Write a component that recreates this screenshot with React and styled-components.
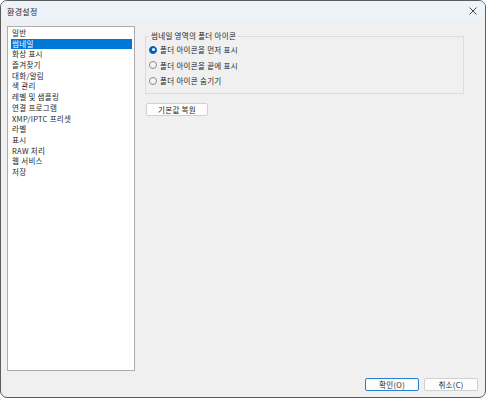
import React from "react";
import styled, { createGlobalStyle } from "styled-components";

const Global = createGlobalStyle`
  html, body { margin: 0; padding: 0; background: #ffffff; }
  body { font-family: "Noto Sans CJK KR", "Noto Sans", sans-serif; }
`;

const Window = styled.div`
  box-sizing: border-box;
  width: 486px;
  height: 398px;
  border: 1px solid #5c5c5c;
  border-radius: 7px;
  overflow: hidden;
  display: flex;
  flex-direction: column;
  background: #f0f0f0;
  font-family: "Noto Sans CJK KR", "Noto Sans", sans-serif;
  font-size: 7.5px;
  letter-spacing: 0.3px;
  color: #262626;
`;

const TitleBar = styled.div`
  height: 20px;
  flex: none;
  background: #eef3fa;
  display: flex;
  align-items: center;
  justify-content: space-between;
  padding: 0 4px 0 6px;
`;

const Title = styled.span`
  font-size: 8px;
  color: #262626;
`;

const CloseBtn = styled.div`
  width: 16px;
  height: 16px;
  display: flex;
  align-items: center;
  justify-content: center;
`;

const Body = styled.div`
  flex: 1;
  display: flex;
  flex-direction: column;
  padding: 5px 6px 0 6px;
`;

const Main = styled.div`
  display: flex;
  gap: 10px;
  height: 345px;
`;

const List = styled.div`
  box-sizing: border-box;
  width: 128px;
  height: 345px;
  background: #ffffff;
  border: 1px solid #a9acb2;
  padding: 1px 2px 0 3px;
  display: flex;
  flex-direction: column;
`;

const Item = styled.div`
  height: 10.7px;
  line-height: 10.7px;
  padding-left: 1px;
  white-space: nowrap;
  background: ${(p) => (p.$selected ? "#0078d7" : "transparent")};
  color: ${(p) => (p.$selected ? "#ffffff" : "#262626")};
`;

const Panel = styled.div`
  display: flex;
  flex-direction: column;
  align-items: flex-start;
  padding-top: 5px;
`;

const Group = styled.fieldset`
  box-sizing: border-box;
  width: 319px;
  height: 63px;
  margin: 0;
  border: 1px solid #dcdcdc;
  padding: 3px 0 0 3px;
  display: flex;
  flex-direction: column;
  gap: 4.5px;
`;

const Legend = styled.legend`
  padding: 0 2px;
  margin-left: 0;
  font-size: 7.5px;
  line-height: 10px;
`;

const RadioRow = styled.label`
  display: flex;
  align-items: center;
  gap: 3px;
  height: 11px;
  line-height: 11px;
`;

const RadioCircle = styled.span`
  box-sizing: border-box;
  width: 8px;
  height: 8px;
  border-radius: 50%;
  flex: none;
  display: flex;
  align-items: center;
  justify-content: center;
  background: ${(p) => (p.$checked ? "#005fb8" : "#f6f6f6")};
  border: 1px solid ${(p) => (p.$checked ? "#005fb8" : "#8a8a8a")};
  &::after {
    content: "";
    display: ${(p) => (p.$checked ? "block" : "none")};
    width: 3px;
    height: 3px;
    border-radius: 50%;
    background: #ffffff;
  }
`;

const Button = styled.button`
  box-sizing: border-box;
  width: ${(p) => p.$w}px;
  height: 13px;
  padding: 0;
  margin: 0;
  font-family: inherit;
  font-size: 7.5px;
  letter-spacing: 0.3px;
  line-height: 11px;
  color: #262626;
  background: #fdfdfd;
  border: 1px solid ${(p) => (p.$primary ? "#2a7fd4" : "#d0d0d0")};
  border-radius: 2px;
`;

const ResetButton = styled(Button)`
  margin-top: 9px;
  margin-left: 1px;
`;

const Footer = styled.div`
  display: flex;
  justify-content: flex-end;
  gap: 5px;
  margin-top: 7px;
  padding-right: 1px;
`;

const items = [
  "일반",
  "썸네일",
  "화상 표시",
  "즐겨찾기",
  "대화/알림",
  "색 관리",
  "레벨 및 샘플링",
  "연결 프로그램",
  "XMP/IPTC 프리셋",
  "라벨",
  "표시",
  "RAW 처리",
  "웹 서비스",
  "저장",
];

const radios = ["폴더 아이콘을 먼저 표시", "폴더 아이콘을 끝에 표시", "폴더 아이콘 숨기기"];

export default function App() {
  return (
    <>
      <Global />
      <Window>
        <TitleBar>
          <Title>환경설정</Title>
          <CloseBtn>
            <svg width="8" height="8" viewBox="0 0 8 8">
              <path d="M0.5 0.5 L7.5 7.5 M7.5 0.5 L0.5 7.5" stroke="#333" strokeWidth="0.9" />
            </svg>
          </CloseBtn>
        </TitleBar>
        <Body>
          <Main>
            <List>
              {items.map((t, i) => (
                <Item key={t} $selected={i === 1}>
                  {t}
                </Item>
              ))}
            </List>
            <Panel>
              <Group>
                <Legend>썸네일 영역의 폴더 아이콘</Legend>
                {radios.map((r, i) => (
                  <RadioRow key={r}>
                    <RadioCircle $checked={i === 0} />
                    {r}
                  </RadioRow>
                ))}
              </Group>
              <ResetButton $w={62}>기본값 복원</ResetButton>
            </Panel>
          </Main>
          <Footer>
            <Button $w={54} $primary>확인(O)</Button>
            <Button $w={54}>취소(C)</Button>
          </Footer>
        </Body>
      </Window>
    </>
  );
}
